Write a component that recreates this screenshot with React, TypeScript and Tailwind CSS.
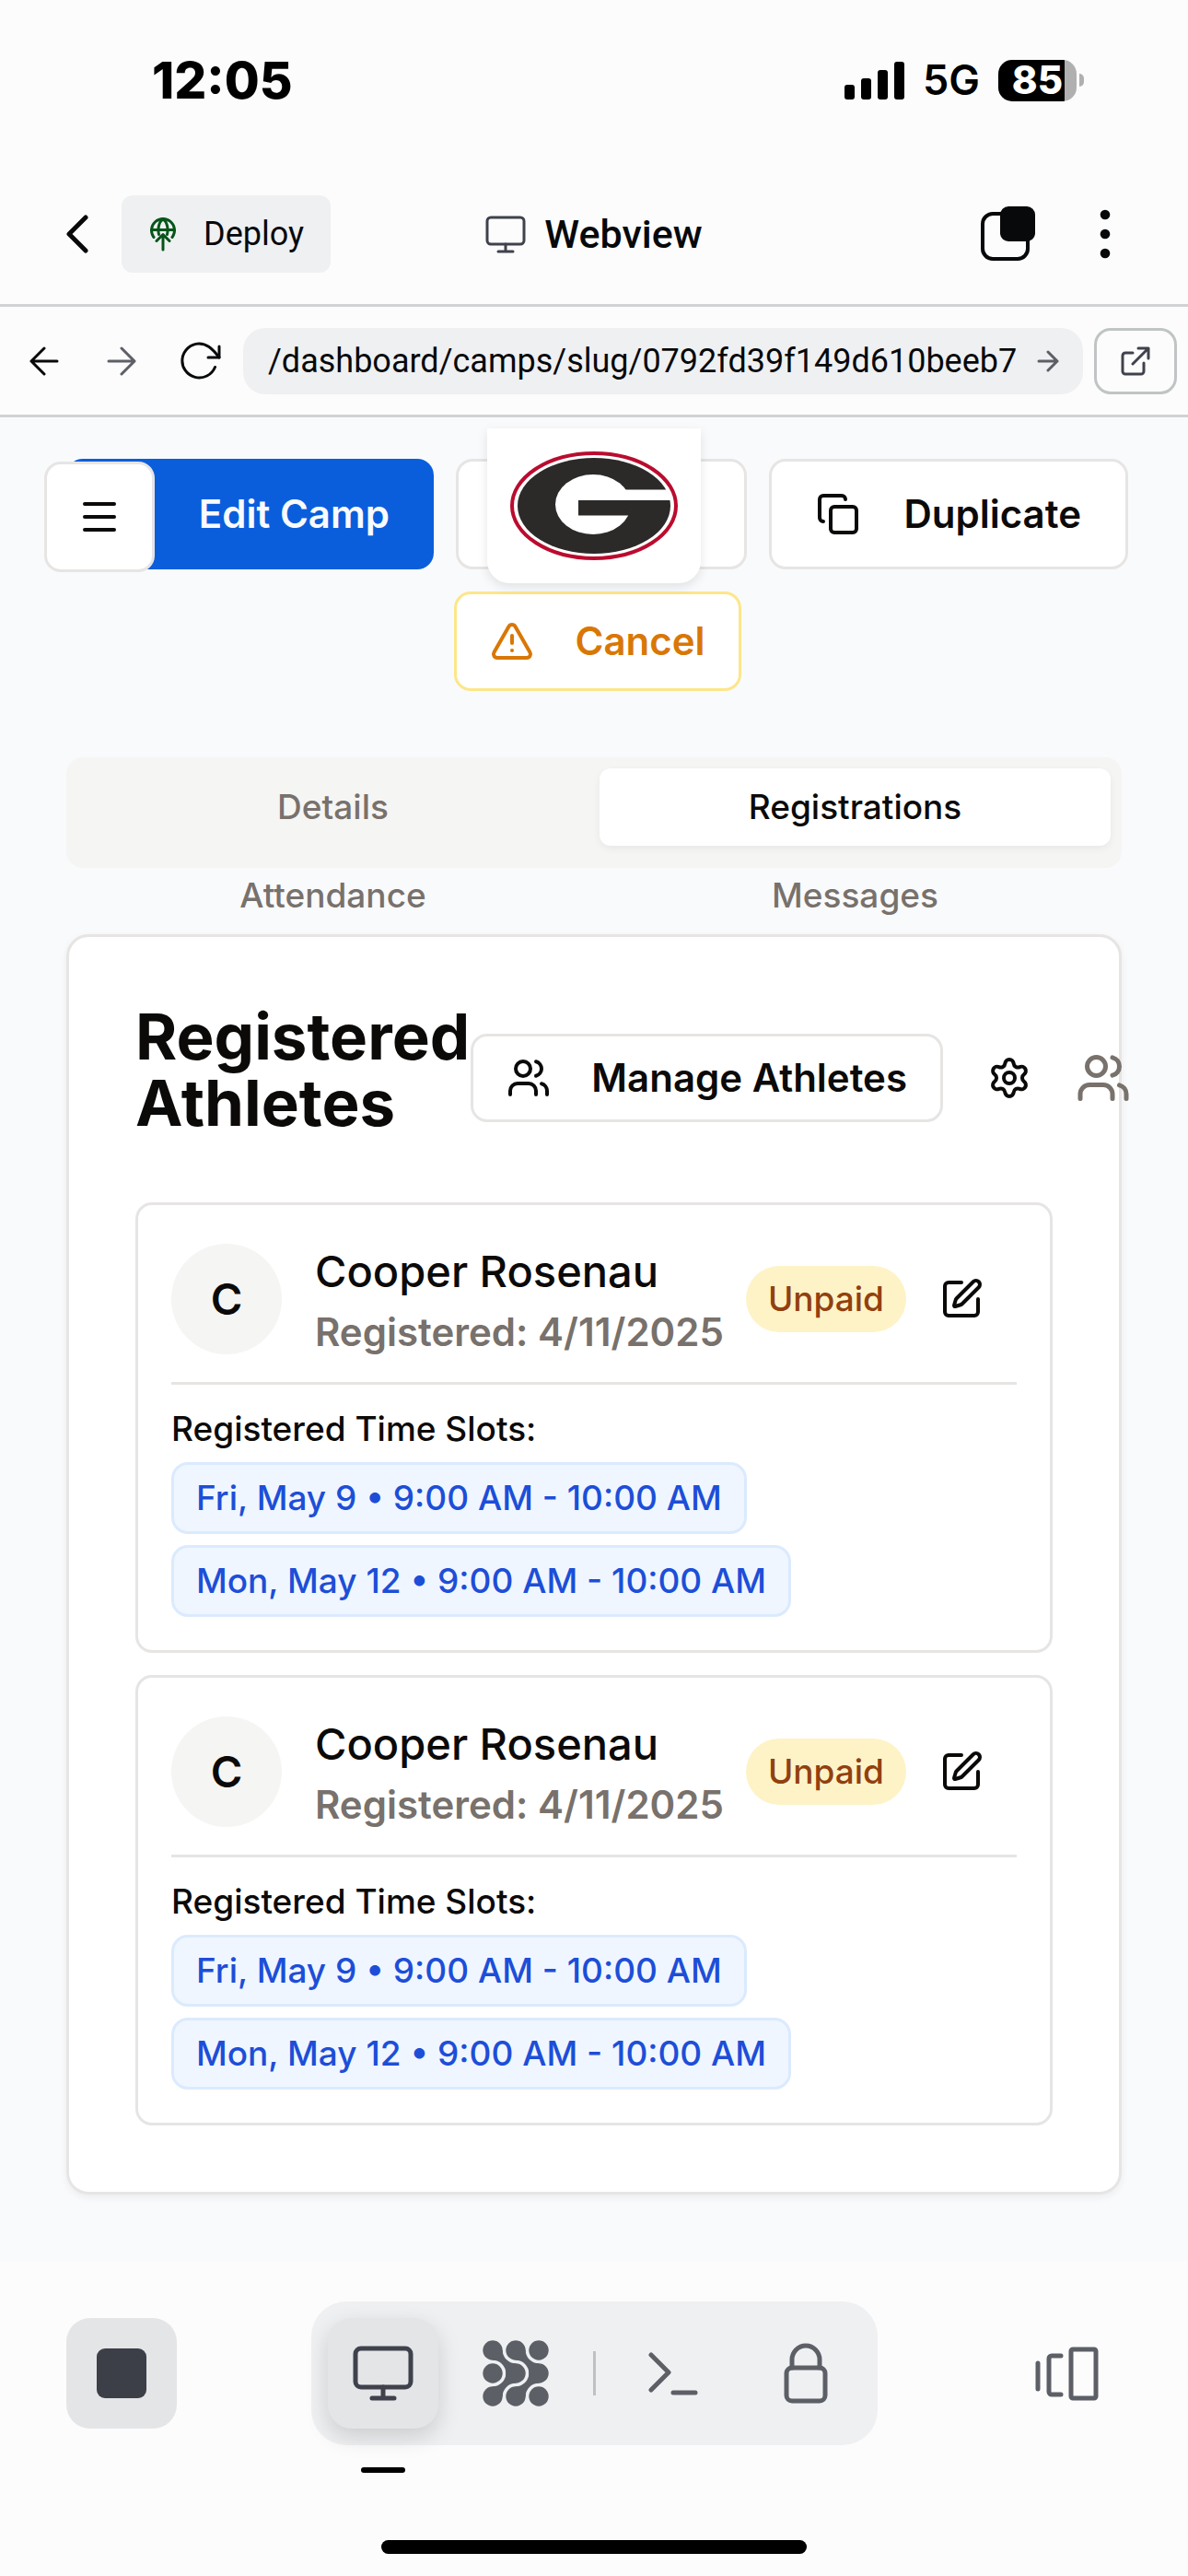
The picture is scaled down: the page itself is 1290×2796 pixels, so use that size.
import React from "react";
import { Copy, Menu, Settings, SquarePen, TriangleAlert, Users } from "lucide-react";

type Registration = { id: number; name: string; registered: string; status: string; slots: string[] };

const registrations: Registration[] = [
  {
    id: 1,
    name: "Cooper Rosenau",
    registered: "4/11/2025",
    status: "Unpaid",
    slots: ["Fri, May 9 • 9:00 AM - 10:00 AM", "Mon, May 12 • 9:00 AM - 10:00 AM"],
  },
  {
    id: 2,
    name: "Cooper Rosenau",
    registered: "4/11/2025",
    status: "Unpaid",
    slots: ["Fri, May 9 • 9:00 AM - 10:00 AM", "Mon, May 12 • 9:00 AM - 10:00 AM"],
  },
];

const tabs = ["Details", "Registrations", "Attendance", "Messages"];

type StrokeProps = {
  w: number;
  h: number;
  sw: number;
  className?: string;
  children: React.ReactNode;
};

function Stroke({ w, h, sw, className, children }: StrokeProps) {
  return (
    <svg
      width={w}
      height={h}
      viewBox={`0 0 ${w} ${h}`}
      fill="none"
      stroke="currentColor"
      strokeWidth={sw}
      strokeLinecap="round"
      strokeLinejoin="round"
      className={className}
      aria-hidden="true"
    >
      {children}
    </svg>
  );
}

function StatusBar() {
  return (
    <div className="flex h-[178px] items-center justify-between pr-[113px] pb-1 pl-[165px] font-['Inter',sans-serif] text-black">
      <span className="text-[55px] leading-[60px] font-extrabold">12:05</span>
      <div className="flex items-center">
        <svg width="65" height="41" viewBox="0 0 65 41" aria-label="Signal strength">
          <rect x="0" y="25" width="11" height="16" rx="3" />
          <rect x="18" y="18" width="11" height="23" rx="3" />
          <rect x="36" y="9" width="11" height="32" rx="3" />
          <rect x="54" y="0" width="11" height="41" rx="3" />
        </svg>
        <span className="ml-5 text-[45px] leading-[48px] font-semibold">5G</span>
        <div className="ml-5 flex items-center gap-[3px]">
          <div className="flex h-[45px] w-[85px] items-center justify-center rounded-[15px] bg-linear-to-r from-black from-85% to-[#b0b0b0] to-85% text-[42px] leading-[48px] font-extrabold text-white">
            85
          </div>
          <div className="h-[14px] w-[5px] rounded-r-full bg-[#b0b0b0]" />
        </div>
      </div>
    </div>
  );
}

function AppHeader() {
  return (
    <header className="grid h-[155px] grid-cols-[1fr_auto_1fr] items-center border-b-3 border-[#d1d2d4] px-[72px] font-['Roboto',sans-serif] text-[#07090b]">
      <div className="flex items-center gap-9">
        <button aria-label="Back">
          <Stroke w={24} h={42} sw={5}>
            <path d="M21 3 3 21l18 18" />
          </Stroke>
        </button>
        <button className="flex h-[84px] items-center gap-[30px] rounded-[12px] bg-[#eff0f2] pr-[29px] pl-[31px] text-[36px] leading-[48px]">
          <Stroke w={28} h={37} sw={3} className="text-[#06551a]">
            <path d="M4 21.500A12.500 12.500 0 1 1 24 21.500" />
            <path d="M2 13.500h24" />
            <path d="M9.500 18.500C8 12 9.500 5 14 1.500C18.500 5 20 12 18.500 18.500" />
            <path d="M14 35V19M7 25.500 14 18.500 21 25.500" />
          </Stroke>
          Deploy
        </button>
      </div>
      <div className="flex items-center gap-5 text-[43px] leading-[48px] font-medium">
        <Stroke w={44} h={42} sw={3} className="text-[#3f424c]">
          <rect x="2" y="3" width="40" height="29" rx="4" />
          <path d="M22 32v8M14 40h16" />
        </Stroke>
        <h1>Webview</h1>
      </div>
      <div className="flex items-center justify-end gap-[70px] pr-3">
        <button aria-label="Windows">
          <svg width="59" height="60" viewBox="0 0 59 60" aria-hidden="true">
            <rect x="2" y="8" width="49" height="49" rx="11" fill="none" stroke="#07090b" strokeWidth="4" />
            <rect x="21" y="0" width="38" height="38" rx="9" fill="#07090b" />
          </svg>
        </button>
        <button aria-label="More">
          <svg width="12" height="54" viewBox="0 0 12 54" fill="#07090b" aria-hidden="true">
            <circle cx="6" cy="6" r="5.300" />
            <circle cx="6" cy="27" r="5.300" />
            <circle cx="6" cy="48" r="5.300" />
          </svg>
        </button>
      </div>
    </header>
  );
}

function AddressBar() {
  return (
    <div className="flex h-[120px] items-center border-b-3 border-[#d1d2d4] pr-3 pl-[32px] font-['Roboto',sans-serif] text-[#07090b]">
      <button aria-label="Go back">
        <Stroke w={32} h={32} sw={3}>
          <path d="M30 16H2M16 2 2 16l14 14" />
        </Stroke>
      </button>
      <button aria-label="Go forward" className="ml-[52px] text-[#5c5f66]">
        <Stroke w={32} h={32} sw={3}>
          <path d="M2 16h28M16 2l14 14-14 14" />
        </Stroke>
      </button>
      <button aria-label="Reload" className="ml-12">
        <Stroke w={44} h={42} sw={3}>
          <path d="M37.500 27.500A18.500 18.500 0 1 1 20 2C28 2 34 6.500 42 17" />
          <path d="M42 5v12H30" />
        </Stroke>
      </button>
      <div className="ml-6 flex h-[72px] min-w-0 flex-1 items-center rounded-[24px] bg-[#eff0f2] pr-[26px] pl-[27px]">
        <input
          aria-label="Path"
          className="min-w-0 flex-1 bg-transparent text-[36px] leading-[48px] outline-none"
          defaultValue="/dashboard/camps/slug/0792fd39f149d610beeb7"
        />
        <button aria-label="Go" className="ml-4 text-[#5c5f66]">
          <Stroke w={24} h={26} sw={3}>
            <path d="M2 13h20M12 3l10 10-10 10" />
          </Stroke>
        </button>
      </div>
      <button
        aria-label="Open in new tab"
        className="ml-3 flex h-[72px] w-[90px] items-center justify-center rounded-[18px] border-3 border-[#c0c4c4] text-[#3f424c]"
      >
        <Stroke w={32} h={32} sw={3}>
          <path d="M13 7H5a3 3 0 0 0-3 3v17a3 3 0 0 0 3 3h17a3 3 0 0 0 3-3v-9" />
          <path d="M13 19 30 2M19 2h11v11" />
        </Stroke>
      </button>
    </div>
  );
}

function TeamLogo() {
  return (
    <div className="absolute top-3 left-1/2 flex w-[232px] -translate-x-1/2 justify-center rounded-b-[24px] bg-white pt-[25px] pb-[25px] shadow-[0_4px_12px_rgba(0,0,0,0.1)]">
      <svg width="182" height="118" viewBox="0 0 182 118" role="img" aria-label="Team logo">
        <ellipse cx="91" cy="59" rx="89" ry="57" fill="#fff" stroke="#ba0c2f" strokeWidth="4" />
        <ellipse cx="91" cy="59" rx="83" ry="52" fill="#2b2a29" />
        <ellipse cx="90" cy="57.500" rx="41" ry="32.500" fill="#fff" />
        <path d="M90 41.500h80l5 11.500H90z" fill="#fff" />
        <path d="M74 53h57v10l-2 6.500H74z" fill="#2b2a29" />
      </svg>
    </div>
  );
}

function CampActions() {
  return (
    <div className="flex flex-wrap justify-center gap-6 pt-[45px] pr-[65px] pl-[72px] text-[42px] leading-[60px] font-semibold">
      <button className="flex h-[120px] w-[399px] items-center justify-end rounded-[18px] bg-[#0a5edc] px-12 text-[#f8fafc]">
        Edit Camp
      </button>
      <button aria-label="Preview camp" className="h-[120px] w-[316px] rounded-[18px] border-3 border-[#e7e5e4] bg-white" />
      <button className="flex h-[120px] w-[390px] items-center justify-between rounded-[18px] border-3 border-[#e7e5e4] bg-white px-12">
        <Copy size={48} strokeWidth={2} />
        Duplicate
      </button>
      <button className="flex h-[108px] w-[312px] items-center justify-between rounded-[18px] border-3 border-[#fde68a] bg-white px-9 text-[#d97706]">
        <TriangleAlert size={48} strokeWidth={2} />
        Cancel
      </button>
    </div>
  );
}

function Tabs() {
  return (
    <div role="tablist" className="mx-[72px] mt-[72px] grid h-[120px] grid-cols-2 gap-3 rounded-[18px] bg-[#f5f5f4] p-3 text-[37px] leading-[48px] font-medium text-[#78716c]">
      {tabs.map((tab) => (
        <button
          key={tab}
          role="tab"
          aria-selected={tab === "Registrations"}
          className="h-[84px] rounded-[12px] aria-selected:bg-white aria-selected:text-[#0c0a09] aria-selected:shadow-[0_3px_8px_rgba(0,0,0,0.06)]"
        >
          {tab}
        </button>
      ))}
    </div>
  );
}

function RegistrationCard({ item }: { item: Registration }) {
  return (
    <li className="rounded-[18px] border-3 border-[#e7e5e4] p-9">
      <div className="flex items-center">
        <div className="flex size-[120px] shrink-0 items-center justify-center rounded-full bg-[#f5f5f4] text-[47px] leading-[72px] font-semibold">
          {item.name[0]}
        </div>
        <div className="ml-9 whitespace-nowrap">
          <p className="text-[47px] leading-[72px] font-medium">{item.name}</p>
          <p className="text-[42px] leading-[60px] font-semibold text-[#78716c]">Registered: {item.registered}</p>
        </div>
        <span className="ml-auto rounded-full bg-[#fef3c7] px-6 py-3 text-[37px] leading-[48px] font-medium text-[#92400e]">
          {item.status}
        </span>
        <button aria-label={`Edit ${item.name}`} className="flex h-[96px] w-[120px] shrink-0 items-center justify-center">
          <SquarePen size={48} strokeWidth={2} />
        </button>
      </div>
      <div className="mt-6 border-t-3 border-[#e7e5e4] pt-6 text-[37px] leading-[48px] font-medium">
        <p>Registered Time Slots:</p>
        <ul className="mt-3 flex flex-wrap gap-3">
          {item.slots.map((slot) => (
            <li key={slot} className="rounded-[18px] border-3 border-[#dbeafe] bg-[#eff6ff] px-6 py-3 text-[#1d4ed8]">
              {slot}
            </li>
          ))}
        </ul>
      </div>
    </li>
  );
}

function RegistrationsPanel() {
  return (
    <section className="mx-[72px] mt-[72px] mb-[72px] rounded-[24px] border-3 border-[#e7e5e4] bg-white p-[72px] shadow-[0_3px_9px_rgba(0,0,0,0.06)]">
      <div className="flex items-center">
        <h2 className="w-[364px] shrink-0 text-[69px] leading-[72px] font-bold">Registered Athletes</h2>
        <div className="flex shrink-0 items-center gap-6 pt-[18px]">
          <button className="flex h-[96px] w-[513px] items-center justify-between rounded-[18px] border-3 border-[#e7e5e4] px-9 text-[42px] leading-[60px] font-semibold">
            <Users size={48} strokeWidth={2} />
            Manage Athletes
          </button>
          <button aria-label="Settings" className="flex size-[96px] items-center justify-center">
            <Settings size={48} strokeWidth={2} />
          </button>
          <Users size={60} strokeWidth={2} className="text-[#78716c]" />
        </div>
      </div>
      <ul className="mt-[72px] flex flex-col gap-6">
        {registrations.map((item) => (
          <RegistrationCard key={item.id} item={item} />
        ))}
      </ul>
    </section>
  );
}

/* A 3x3 field of dots; neighbouring columns are joined by flowing diagonal links. */
const dots = [0, 25, 50];

function MeshIcon() {
  return (
    <svg width="72" height="72" viewBox="-11 -11 72 72" fill="currentColor" aria-hidden="true">
      {dots.map((x) => dots.map((y) => <circle key={`${x}-${y}`} cx={x} cy={y} r="10.700" />))}
      {[0, 25].map((x) => (
        <g key={x} transform={`translate(${x} 0)`}>
          <path d="M10.700 0A14.300 14.300 0 0 0 25 14.300V25H14.300A14.300 14.300 0 0 0 0 10.700V0Z" />
          <path d="M14.300 25A14.300 14.300 0 0 1 0 39.300V50H10.700A14.300 14.300 0 0 1 25 35.700V25Z" />
        </g>
      ))}
    </svg>
  );
}

function BottomBar() {
  return (
    <footer className="flex flex-1 flex-col justify-between bg-[#fcfcfc] pt-[44px] pb-6">
      <div className="flex items-center justify-between px-[72px]">
        <button aria-label="Stop" className="flex size-[120px] items-center justify-center rounded-[26px] bg-[#e4e5e7]">
          <span className="size-[54px] rounded-[9px] bg-[#3c3f48]" />
        </button>
        <nav className="flex items-center gap-6 rounded-[38px] bg-[#eff0f2] p-[18px] text-[#5c5f66]">
          <button
            aria-label="Webview"
            className="relative flex size-[120px] items-center justify-center rounded-[26px] bg-[#e4e5e7] text-[#3f424c] shadow-[0_9px_24px_rgba(0,0,0,0.15)]"
          >
            <Stroke w={66} h={60} sw={5}>
              <rect x="3" y="3" width="60" height="42" rx="6" />
              <path d="M33 45v12M21 57h24" />
            </Stroke>
            <span className="absolute top-[162px] h-[6px] w-12 rounded-full bg-black" />
          </button>
          <button aria-label="Agent" className="flex size-[120px] items-center justify-center">
            <MeshIcon />
          </button>
          <span className="h-12 w-[3px] bg-[#c0c1c4]" />
          <button aria-label="Shell" className="flex size-[120px] items-center justify-center">
            <Stroke w={54} h={48} sw={5}>
              <path d="M3 4l19 19L3 42M27 45h24" />
            </Stroke>
          </button>
          <button aria-label="Secrets" className="flex size-[120px] items-center justify-center">
            <Stroke w={48} h={66} sw={5}>
              <rect x="3" y="27" width="42" height="36" rx="6" />
              <path d="M9 27V18a15 15 0 0 1 30 0v9" />
            </Stroke>
          </button>
        </nav>
        <button aria-label="Switch panes" className="flex size-[120px] items-center justify-center text-[#5c5f66]">
          <Stroke w={70} h={60} sw={5}>
            <path d="M4 19v28M29 11H19a3 3 0 0 0-3 3v36a3 3 0 0 0 3 3h10" />
            <rect x="40" y="4" width="27" height="53" rx="2" />
          </Stroke>
        </button>
      </div>
      <div className="mx-auto h-[15px] w-[462px] rounded-full bg-black" />
    </footer>
  );
}

export default function App() {
  return (
    <div className="flex min-h-screen flex-col bg-[#fcfcfc]">
      <StatusBar />
      <AppHeader />
      <AddressBar />
      <main className="relative bg-[#f9fafc] font-['Inter',sans-serif] text-[#0c0a09]">
        <CampActions />
        <button
          aria-label="Menu"
          className="absolute top-12 left-12 flex size-[120px] items-center justify-center rounded-[18px] border-3 border-[#e7e5e4] bg-white"
        >
          <Menu size={48} strokeWidth={2} />
        </button>
        <TeamLogo />
        <Tabs />
        <RegistrationsPanel />
      </main>
      <BottomBar />
    </div>
  );
}
